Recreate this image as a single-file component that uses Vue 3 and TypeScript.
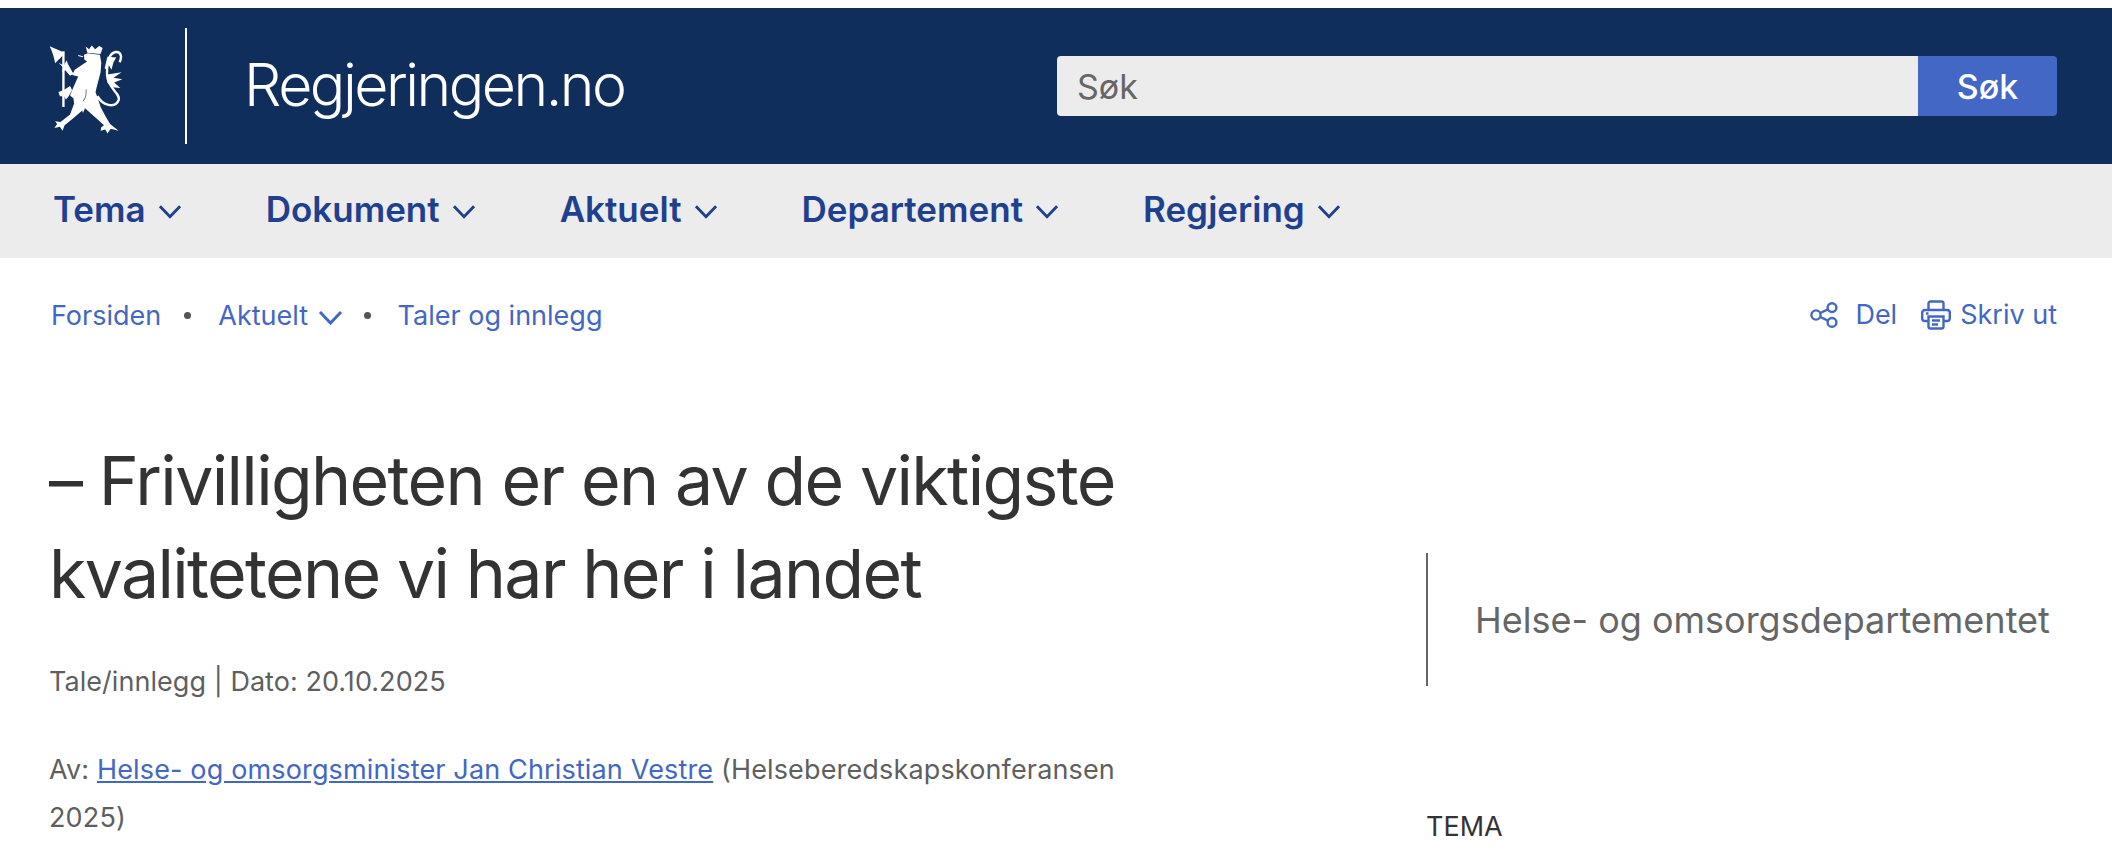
<template>
  <div class="page">
    <header class="masthead">
      <a class="logo" href="#" aria-label="Regjeringen.no">
        <svg class="lion" viewBox="60 38 218 262" aria-hidden="true">
          <!-- axe -->
          <path class="fill" d="M62 43 L106 62 C100 72 90 80 78 93 C76 78 70 60 62 43Z" />
          <rect class="fill" x="99" y="58" width="7" height="164" />
          <path class="fill" d="M88 92 L104 100 L112 84 L116 96 L132 124 L122 130 L108 114 L98 118 L102 106Z" />
          <path class="fill" d="M88 178 L104 172 L122 160 L128 172 L118 190 L110 200 L104 190 L92 190Z" />
          <!-- crown -->
          <path class="fill" d="M168 44 L178 52 L186 41 L196 52 L208 42 L218 48 L212 66 L173 62Z" />
          <path class="stroke thin" d="M146 70 L160 74" />
          <!-- lion -->
          <path class="fill" d="M163 68 L174 64 L210 68 L214 92 L212 120 L204 150 L197 178 L205 200 L212 222 L228 252 L240 272 L265 292 L242 286 L232 300 L226 288 L212 292 L214 282 L222 276 L196 252 L166 226 L160 240 L158 232 L128 258 L106 276 L100 292 L92 280 L76 284 L84 272 L78 264 L94 266 L122 244 L134 212 L132 196 L122 188 L130 168 L146 132 L128 128 L136 112 L160 96 L172 88 L164 82Z" />
          <path class="gap" d="M160 205 C172 190 168 180 170 170" />
          <!-- tail -->
          <path class="stroke" d="M203 190 C216 216 254 228 265 202 C272 182 232 166 231 128 C230 92 236 64 256 60 C272 58 276 74 268 90" />
          <path class="fill" d="M224 108 L232 74 L258 76 L250 90 L244 112 L236 98 L232 114Z" />
          <path class="fill" d="M232 126 L274 120 L250 136 L276 140 L252 150 L270 166 L246 164 L232 150Z" />
        </svg>
        <span class="logo-rule"></span>
        <span class="site-name">Regjeringen.no</span>
      </a>
      <form class="search" @submit.prevent>
        <input class="search-input" type="text" placeholder="Søk" aria-label="Søk" />
        <button class="search-btn" type="submit">Søk</button>
      </form>
    </header>

    <nav class="mainnav">
      <a v-for="item in navItems" :key="item" class="nav-item" href="#">
        {{ item }}
        <svg class="nav-chev" viewBox="0 0 25 15" aria-hidden="true"><path d="M2 2 L12.5 13 L23 2" /></svg>
      </a>
    </nav>

    <div class="toolbar">
      <ol class="crumbs">
        <li><a href="#">Forsiden</a></li>
        <li class="dot"></li>
        <li>
          <a href="#">Aktuelt
            <svg class="crumb-chev" viewBox="0 0 25 15" aria-hidden="true"><path d="M2 2 L12.5 13 L23 2" /></svg>
          </a>
        </li>
        <li class="dot dot-last"></li>
        <li><a href="#">Taler og innlegg</a></li>
      </ol>
      <div class="actions">
        <a class="action share" href="#">
          <svg viewBox="0 0 28 26" class="ico-share" aria-hidden="true">
            <circle cx="6" cy="13" r="4.6" />
            <circle cx="22" cy="5.6" r="4.4" />
            <circle cx="22" cy="20.4" r="4.4" />
            <path d="M10.2 11 L18 7.4 M10.2 15 L18 18.6" />
          </svg>
          Del
        </a>
        <a class="action print" href="#">
          <svg viewBox="0 0 30 30" class="ico-print" aria-hidden="true">
            <path d="M7.5 10 V3.5 a2 2 0 0 1 2-2 H20.5 a2 2 0 0 1 2 2 V10" />
            <path d="M7 21 H4 a2.8 2.8 0 0 1-2.8-2.8 V12.8 A2.8 2.8 0 0 1 4 10 H26 a2.8 2.8 0 0 1 2.8 2.8 V18.2 A2.8 2.8 0 0 1 26 21 H23" />
            <path d="M7.5 16.5 H22.5 V26.5 a2 2 0 0 1-2 2 H9.5 a2 2 0 0 1-2-2Z" />
            <path d="M11 20.5 H19 M11 24.5 H17 M5 13.5 H7.5" />
          </svg>
          Skriv ut
        </a>
      </div>
    </div>

    <main class="content">
      <article class="article">
        <h1 class="title">– Frivilligheten er en av de viktigste kvalitetene vi har her i landet</h1>
        <p class="meta">Tale/innlegg | Dato: 20.10.2025</p>
        <p class="byline">
          Av: <a href="#">Helse- og omsorgsminister Jan Christian Vestre</a> (Helseberedskapskonferansen 2025)
        </p>
      </article>
      <aside class="side">
        <div class="owner">Helse- og omsorgsdepartementet</div>
        <h2 class="side-head">TEMA</h2>
      </aside>
    </main>
  </div>
</template>

<script setup lang="ts">
const navItems: string[] = ['Tema', 'Dokument', 'Aktuelt', 'Departement', 'Regjering']
</script>

<style>
html, body { margin: 0; background: #fff; overflow: hidden; }
</style>

<style scoped>
.page { height: 850px; overflow: hidden; padding-top: 8px; box-sizing: border-box; font-family: Inter, "Liberation Sans", sans-serif; color: #333; }
a { text-decoration: none; color: #4367c4; }

.masthead { height: 156px; background: #0f2e5c; display: flex; justify-content: space-between; padding: 0 55px 0 50px; }
.logo { display: flex; align-items: center; height: 156px; color: #fff; }
.lion { width: 74px; height: 90px; margin-top: 6px; margin-left: -1px; }
.fill { fill: #fff; }
.stroke { fill: none; stroke: #fff; stroke-width: 7; }
.thin { stroke-width: 3; }
.gap { fill: none; stroke: #0f2e5c; stroke-width: 2; }
.logo-rule { width: 2px; height: 116px; background: #fff; margin: 0 57px 0 62px; }
.site-name { font-size: 59px; font-weight: 300; letter-spacing: -2.5px; margin-bottom: 3px; }

.search { width: 1000px; height: 60px; margin-top: 48px; display: flex; border-radius: 4px; overflow: hidden; }
.search-input { flex: 1; min-width: 0; border: 0; outline: 0; background: #ececec; padding: 0 20px; font: 400 34px Inter, "Liberation Sans", sans-serif; color: #666; }
.search-input::placeholder { color: #666; opacity: 1; }
.search-btn { width: 139px; border: 0; background: #4367c4; color: #fff; font: 500 34px Inter, "Liberation Sans", sans-serif; }

.mainnav { height: 94px; background: #ececec; display: flex; align-items: center; gap: 84px; padding: 0 0 5px 53px; box-sizing: border-box; }
.nav-item { display: flex; align-items: center; gap: 12px; font-size: 35px; font-weight: 600; color: #1f3f8f; }
.nav-chev { width: 24px; height: 15px; margin-top: 5px; }
.nav-chev path, .crumb-chev path { fill: none; stroke: currentColor; stroke-width: 3; }

.toolbar { display: flex; justify-content: space-between; align-items: center; padding: 39px 55px 0 51px; }
.crumbs { list-style: none; margin: 2px 0 0; padding: 0; display: flex; align-items: center; font-size: 27px; }
.crumb-chev { width: 27px; height: 15px; margin-left: 1px; }
.dot { width: 7px; height: 7px; border-radius: 50%; background: #555; margin: 0 27px 0 23px; }
.dot-last { margin-left: 20px; }
.actions { display: flex; align-items: center; gap: 24px; font-size: 27px; }
.action { display: flex; align-items: center; }
.action svg { fill: none; stroke: #4367c4; stroke-width: 2.4; }
.ico-share { width: 28px; height: 26px; margin-right: 17px; }
.ico-print { width: 30px; height: 30px; margin-right: 9px; }

.content { display: grid; grid-template-columns: 1130px 629px; column-gap: 247px; padding: 0 55px 0 49px; }
.title { margin: 102px 0 0; font-size: 68px; font-weight: 400; line-height: 93px; letter-spacing: -1.65px; color: #333; }
.meta { margin: 38px 0 0; font-size: 27px; line-height: 48px; letter-spacing: 0.05px; color: #5f5f5f; }
.byline { margin: 40px 0 0; font-size: 27px; line-height: 48px; letter-spacing: 0.15px; color: #5f5f5f; }
.byline a { text-decoration: underline; }
.side { padding-top: 221px; }
.owner { height: 133px; border-left: 2px solid #666; padding-left: 47px; display: flex; align-items: center; font-size: 36px; color: #666; white-space: nowrap; }
.side-head { margin: 124px 0 0; font-size: 27px; font-weight: 400; color: #333; }
</style>
